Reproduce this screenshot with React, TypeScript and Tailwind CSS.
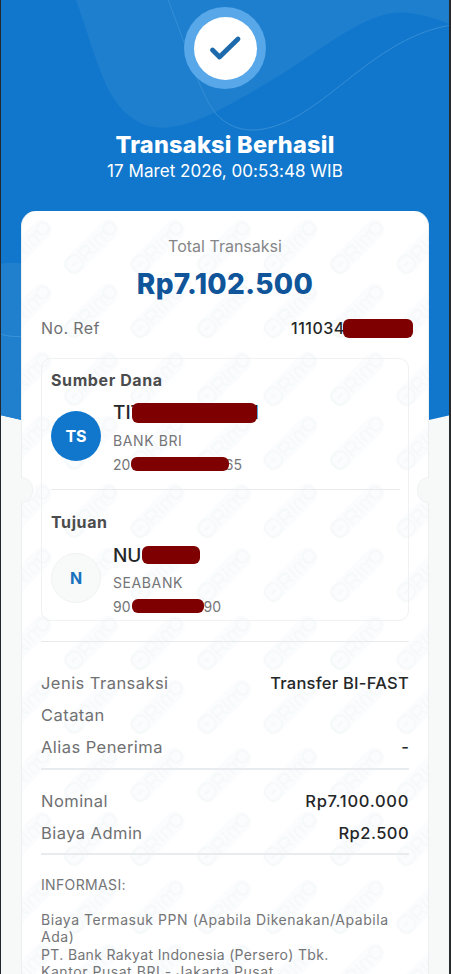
import React from 'react';

const Redact: React.FC<{ className: string }> = ({ className }) => (
    <span className={`absolute bg-[#7f0000] rounded-[6px] ${className}`} />
);

const Backdrop: React.FC = () => (
    <svg className="absolute left-0 top-0" width="451" height="434" viewBox="0 0 451 434" fill="none">
        <path d="M0 0H451V415Q338 442 225 442Q112 442 0 415Z" fill="#1177cc" />
        <path d="M76 0C98 62 104 98 132 118C166 143 213 115 262 86C322 52 366 8 408 13C425 15 438 19 451 25V0Z" fill="#1e7fce" />
        <path d="M0 264Q12 261 30 265V422L0 415Z" fill="#2080ce" />
        <path d="M0 334Q12 338 30 336" stroke="#3b93d8" strokeWidth="1" />
        <path d="M168 0C188 50 198 90 216 114C236 135 262 134 292 119C340 94 384 36 451 25" stroke="#358ed5" strokeWidth="1" />
    </svg>
);

// Diagonal chain mark, tiled over the whole card
const Watermark: React.FC = () => (
    <svg className="absolute inset-0 h-full w-full" fill="none">
        <defs>
            <g id="mark" stroke="#f6f9fa" strokeWidth="2">
                <rect x="-34" y="-10" width="68" height="20" rx="9" fill="#fbfcfd" stroke="none" />
                <rect x="-32" y="-8" width="16" height="16" rx="6" />
                <path d="M-27 0H-21M-12 7V-6H-6Q-2 -6 -2 -2T-6 2H-12M-5 2L-1 7" />
                <path d="M3 -6V7M8 7V-2Q12 -7 15 -1V7M15 -1Q19 -6 21 0" />
                <circle cx="26" cy="0" r="6" />
            </g>
            <pattern id="marks" width="66.5" height="132" patternUnits="userSpaceOnUse" x="36" y="3">
                <use href="#mark" transform="translate(33 33) rotate(-45)" />
                <use href="#mark" transform="translate(33 97) rotate(-45)" />
            </pattern>
        </defs>
        <rect width="100%" height="100%" fill="url(#marks)" />
    </svg>
);

const Row: React.FC<{ label: string; value?: string; valueClass?: string }> = ({ label, value, valueClass = '' }) => (
    <div className="flex h-[31.6px] items-center justify-between text-[16.5px]">
        <span className="tracking-[0.45px] text-[#6f7072]">{label}</span>
        <span className={`font-medium text-[#242628] ${valueClass}`}>{value}</span>
    </div>
);

const Party: React.FC<{ title: string; initials: string; avatarClass: string; children: React.ReactNode }> = ({ title, initials, avatarClass, children }) => (
    <>
        <h2 className="text-[16px] leading-5 font-bold tracking-[0.6px] text-[#4b4c4e]">{title}</h2>
        <div className="mt-[11px] flex gap-3">
            <div className={`mt-[10px] flex h-[50px] w-[50px] items-center justify-center rounded-full text-[16px] font-bold ${avatarClass}`}>
                {initials}
            </div>
            <div className="text-[14px] text-[#747577]">{children}</div>
        </div>
    </>
);

export default function App() {
    return (
        <div className="relative h-[974px] w-[451px] overflow-hidden bg-[#f7f9f9] font-['Inter',sans-serif]">
            <Backdrop />
            <div className="absolute inset-y-0 left-0 w-px bg-[#22282e]" />
            <div className="absolute inset-y-0 right-0 w-[2px] bg-[#282b2e]" />

            <header className="relative flex h-[211px] w-[450px] flex-col items-center pt-[7px] text-white">
                <div className="flex h-[82px] w-[82px] items-center justify-center rounded-full bg-[#58a7e9]">
                    <div className="flex h-[63px] w-[63px] items-center justify-center rounded-full bg-white">
                        <svg width="34" height="28" viewBox="0 0 34 28" fill="none">
                            <path d="M4.5 16L11.5 23L30 5" stroke="#1c69ac" strokeWidth="4.8" strokeLinecap="round" strokeLinejoin="round" />
                        </svg>
                    </div>
                </div>
                <h1 className="mt-[42px] text-[23.5px] leading-7 font-extrabold tracking-[0.25px]">Transaksi Berhasil</h1>
                <p className="text-[17px] leading-6 tracking-[0.05px]">17 Maret 2026, 00:53:48 WIB</p>
            </header>

            <main className="relative ml-[21px] h-[790px] w-[408px] rounded-t-[15px] border-x border-[#eceff0] bg-white">
                <Watermark />
                <div className="absolute top-[266px] -left-[1px] h-[26px] w-[12px] rounded-r-full border border-l-0 border-[#f0f2f3] bg-[#f7f9f9]" />
                <div className="absolute top-[266px] -right-[1px] h-[26px] w-[12px] rounded-l-full border border-r-0 border-[#f0f2f3] bg-[#f7f9f9]" />

                <div className="relative px-[19px] pt-[23px]">
                    <div className="text-center">
                        <p className="text-[16px] leading-6 text-[#858688]">Total Transaksi</p>
                        <p className="mt-[10px] text-[28px] leading-8 font-extrabold tracking-[0.3px] text-[#10559a]">Rp7.102.500</p>
                    </div>

                    <div className="relative mt-[12px] flex h-8 items-center text-[16px]">
                        <span className="tracking-[0.4px] text-[#6f7072]">No. Ref</span>
                        <span className="absolute left-[250px] font-medium tracking-[0.5px] text-[#242628]">111034</span>
                        <Redact className="left-[302px] top-[7px] h-[19px] w-[70px]" />
                    </div>

                    <section className="mt-[14px] h-[263px] rounded-[10px] border border-[#eff1f2] px-[9px]">
                        <div className="h-[130px] pt-[11px]">
                            <Party title="Sumber Dana" initials="TS" avatarClass="bg-[#1177cc] text-white">
                                <div className="relative h-6 w-[150px] text-[19px] leading-6 font-medium text-[#242628]">
                                    TIT
                                    <span className="absolute right-[4px]">I</span>
                                    <Redact className="left-[19px] top-[2px] h-[20px] w-[125px]" />
                                </div>
                                <div className="mt-[4px] leading-6 tracking-[0.6px]">BANK BRI</div>
                                <div className="relative w-[129px] leading-6">
                                    20
                                    <span className="absolute right-0">65</span>
                                    <Redact className="left-[18px] top-[4px] h-[14px] w-[98px]" />
                                </div>
                            </Party>
                        </div>
                        <div className="-mr-[1px] h-px bg-[#e8eaeb]" />
                        <div className="pt-[22px]">
                            <Party title="Tujuan" initials="N" avatarClass="border border-[#f1f2f2] bg-[#f8f9f9] text-[#1873bd]">
                                <div className="relative mt-px h-6 w-[100px] text-[19px] leading-6 font-medium text-[#242628]">
                                    NU
                                    <Redact className="left-[29px] top-[2px] h-[18px] w-[58px]" />
                                </div>
                                <div className="mt-[3px] leading-6 tracking-[0.6px]">SEABANK</div>
                                <div className="relative w-[108px] leading-6">
                                    90
                                    <span className="absolute right-0">90</span>
                                    <Redact className="left-[19px] top-[4px] h-[14px] w-[72px]" />
                                </div>
                            </Party>
                        </div>
                    </section>

                    <div className="mt-[20px] h-px bg-[#e8eaeb]" />
                    <div className="h-[126px] pt-[26px]">
                        <Row label="Jenis Transaksi" value="Transfer BI-FAST" valueClass="tracking-[0.25px]" />
                        <Row label="Catatan" />
                        <Row label="Alias Penerima" value="-" />
                    </div>
                    <div className="h-[2px] bg-[#e8ecee]" />
                    <div className="h-[83px] pt-4">
                        <Row label="Nominal" value="Rp7.100.000" valueClass="tracking-[0.7px]" />
                        <Row label="Biaya Admin" value="Rp2.500" valueClass="tracking-[0.45px]" />
                    </div>
                    <div className="h-[2px] bg-[#e8ecee]" />

                    <footer className="pt-[21px] text-[14px] leading-[17.5px] tracking-[0.35px] whitespace-nowrap text-[#747577]">
                        <p>INFORMASI:</p>
                        <p className="mt-[17px] tracking-[0.55px]">Biaya Termasuk PPN (Apabila Dikenakan/Apabila<br />Ada)</p>
                        <p>PT. Bank Rakyat Indonesia (Persero) Tbk.</p>
                        <p className="tracking-[0.55px]">Kantor Pusat BRI - Jakarta Pusat</p>
                    </footer>
                </div>
            </main>
        </div>
    );
}
